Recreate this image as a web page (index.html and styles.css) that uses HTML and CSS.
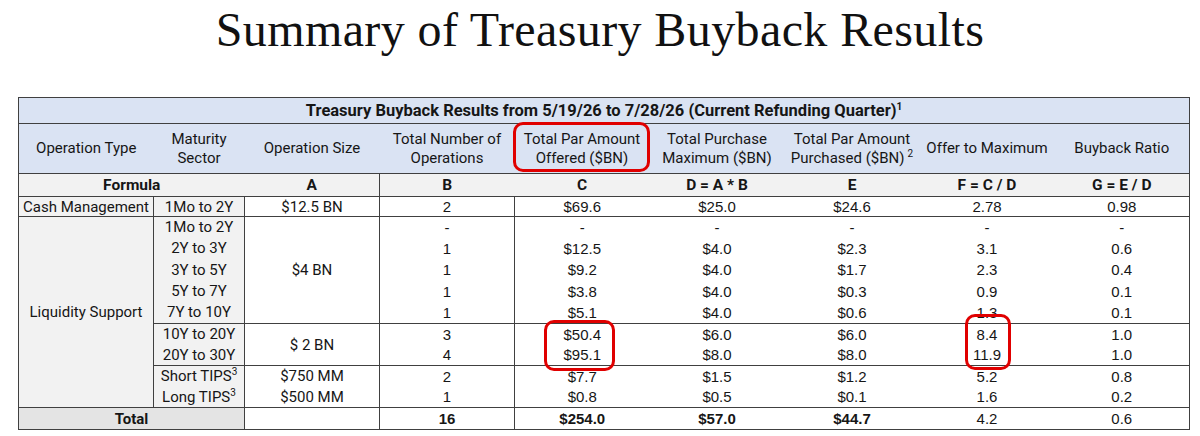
FILE: index.html
```html
<!DOCTYPE html>
<html lang="en">
<head>
<meta charset="utf-8">
<title>Summary of Treasury Buyback Results</title>
<link rel="stylesheet" href="styles.css">
</head>
<body>
<h1 class="title">Summary of Treasury Buyback Results</h1>
<div class="wrap">
  <table class="results">
    <colgroup>
      <col class="cw"><col class="cs"><col class="cw"><col class="cw"><col class="cw"><col class="cw"><col class="cw"><col class="cw"><col class="cw">
    </colgroup>
    <thead>
      <tr class="r-title"><th colspan="9">Treasury Buyback Results from 5/19/26 to 7/28/26 (Current Refunding Quarter)<sup>1</sup></th></tr>
      <tr class="r-head">
        <th>Operation Type</th>
        <th>Maturity<br>Sector</th>
        <th>Operation Size</th>
        <th>Total Number of<br>Operations</th>
        <th>Total Par Amount<br>Offered ($BN)</th>
        <th>Total Purchase<br>Maximum ($BN)</th>
        <th>Total Par Amount<br>Purchased ($BN)<sup class="gap">2</sup></th>
        <th>Offer to Maximum</th>
        <th>Buyback Ratio</th>
      </tr>
      <tr class="r-formula">
        <th colspan="2">Formula</th>
        <th class="vr">A</th>
        <th>B</th>
        <th>C</th>
        <th>D = A * B</th>
        <th>E</th>
        <th>F = C / D</th>
        <th>G = E / D</th>
      </tr>
    </thead>
    <tbody>
      <tr class="end cash">
        <td class="lbl vr">Cash Management</td>
        <td class="lbl vr">1Mo to 2Y</td>
        <td class="vr">$12.5 BN</td>
        <td class="num vr">2</td>
        <td class="num">$69.6</td>
        <td class="num">$25.0</td>
        <td class="num">$24.6</td>
        <td class="num">2.78</td>
        <td class="num">0.98</td>
      </tr>
      <tr>
        <td class="lbl vr" rowspan="9">Liquidity Support</td>
        <td class="lbl vr">1Mo to 2Y</td>
        <td class="vr bb" rowspan="5">$4 BN</td>
        <td class="num vr">-</td>
        <td class="num">-</td>
        <td class="num">-</td>
        <td class="num">-</td>
        <td class="num">-</td>
        <td class="num">-</td>
      </tr>
      <tr>
        <td class="lbl vr">2Y to 3Y</td>
        <td class="num vr">1</td>
        <td class="num">$12.5</td>
        <td class="num">$4.0</td>
        <td class="num">$2.3</td>
        <td class="num">3.1</td>
        <td class="num">0.6</td>
      </tr>
      <tr class="tall">
        <td class="lbl vr">3Y to 5Y</td>
        <td class="num vr">1</td>
        <td class="num">$9.2</td>
        <td class="num">$4.0</td>
        <td class="num">$1.7</td>
        <td class="num">2.3</td>
        <td class="num">0.4</td>
      </tr>
      <tr>
        <td class="lbl vr">5Y to 7Y</td>
        <td class="num vr">1</td>
        <td class="num">$3.8</td>
        <td class="num">$4.0</td>
        <td class="num">$0.3</td>
        <td class="num">0.9</td>
        <td class="num">0.1</td>
      </tr>
      <tr class="end tall">
        <td class="lbl vr">7Y to 10Y</td>
        <td class="num vr">1</td>
        <td class="num">$5.1</td>
        <td class="num">$4.0</td>
        <td class="num">$0.6</td>
        <td class="num">1.3</td>
        <td class="num">0.1</td>
      </tr>
      <tr>
        <td class="lbl vr">10Y to 20Y</td>
        <td class="vr bb" rowspan="2">$ 2 BN</td>
        <td class="num vr">3</td>
        <td class="num">$50.4</td>
        <td class="num">$6.0</td>
        <td class="num">$6.0</td>
        <td class="num">8.4</td>
        <td class="num">1.0</td>
      </tr>
      <tr class="end">
        <td class="lbl vr">20Y to 30Y</td>
        <td class="num vr">4</td>
        <td class="num">$95.1</td>
        <td class="num">$8.0</td>
        <td class="num">$8.0</td>
        <td class="num">11.9</td>
        <td class="num">1.0</td>
      </tr>
      <tr>
        <td class="lbl vr">Short TIPS<sup>3</sup></td>
        <td class="vr">$750 MM</td>
        <td class="num vr">2</td>
        <td class="num">$7.7</td>
        <td class="num">$1.5</td>
        <td class="num">$1.2</td>
        <td class="num">5.2</td>
        <td class="num">0.8</td>
      </tr>
      <tr class="end">
        <td class="lbl vr">Long TIPS<sup>3</sup></td>
        <td class="vr">$500 MM</td>
        <td class="num vr">1</td>
        <td class="num">$0.8</td>
        <td class="num">$0.5</td>
        <td class="num">$0.1</td>
        <td class="num">1.6</td>
        <td class="num">0.2</td>
      </tr>
      <tr class="total">
        <td class="tlbl vr" colspan="2">Total</td>
        <td class="vr"></td>
        <td class="num b vr">16</td>
        <td class="num b">$254.0</td>
        <td class="num b">$57.0</td>
        <td class="num b">$44.7</td>
        <td class="num">4.2</td>
        <td class="num">0.6</td>
      </tr>
    </tbody>
  </table>
  <div class="hl hl-head"></div>
  <div class="hl hl-offered"></div>
  <div class="hl hl-ratio"></div>
</div>
</body>
</html>
```

FILE: styles.css
```css
* { box-sizing: border-box; }

body {
  margin: 0;
  background: #ffffff;
  color: #111111;
}

.title {
  margin: 0;
  padding-top: 1px;
  font-family: "Liberation Serif", "Times New Roman", serif;
  font-weight: normal;
  font-size: 48px;
  line-height: 57px;
  letter-spacing: 0.4px;
  text-align: center;
  color: #111111;
}

.wrap {
  position: relative;
  width: 1171px;
  margin: 39px 0 0 18px;
}

.results {
  border-collapse: collapse;
  table-layout: fixed;
  width: 1171px;
  font-family: Roboto, "Noto Sans", sans-serif;
  font-size: 15px;
  color: #161616;
  border: 1px solid #404040;
}

.cw { width: 135px; }
.cs { width: 91px; }

th, td {
  padding: 0;
  text-align: center;
  vertical-align: middle;
  font-weight: normal;
  white-space: nowrap;
}

.r-title th {
  height: 26px;
  background: #dae3f3;
  font-weight: 700;
  font-size: 16.5px;
  border-bottom: 1px solid #404040;
}

.r-head th {
  height: 50px;
  line-height: 19px;
  background: #dae3f3;
  border-bottom: 1px solid #404040;
}

.r-formula th {
  height: 23px;
  background: #f2f2f2;
  font-weight: 700;
  font-size: 15.5px;
  border-bottom: 1px solid #404040;
}

tbody tr { height: 21px; }
tbody tr.cash { height: 20px; }
tbody tr.tall { height: 22px; }

.vr { border-right: 1px solid #404040; }
.bb { border-bottom: 1px solid #404040; }
.end td { border-bottom: 1px solid #404040; }

.lbl { background: #f2f2f2; }

.num {
  font-family: "Liberation Sans", Arial, sans-serif;
  font-size: 15px;
}

.total td {
  height: 22px;
  border-top: 1px solid #404040;
}

.total .tlbl {
  background: #e4e4e4;
  font-weight: 700;
}

.total .b { font-weight: 700; }

sup {
  font-size: 10px;
  line-height: 0;
  vertical-align: 6px;
}

sup.gap { margin-left: 3px; }

.hl {
  position: absolute;
  border: 3.5px solid #e00000;
  border-radius: 10px;
}

.hl-head { left: 495px; top: 25px; width: 137px; height: 50px; }
.hl-offered { left: 526px; top: 223px; width: 71px; height: 51px; }
.hl-ratio { left: 947px; top: 217px; width: 46px; height: 56px; }
```
